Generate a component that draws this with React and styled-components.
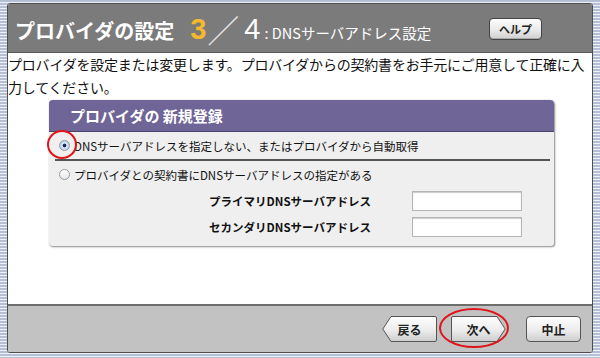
import React from 'react'
import styled, { createGlobalStyle } from 'styled-components'

const Global = createGlobalStyle`
  html, body { margin: 0; padding: 0; }
  body {
    width: 600px;
    height: 358px;
    overflow: hidden;
    font-family: "Noto Sans CJK JP", "Noto Sans", sans-serif;
    background: repeating-linear-gradient(to bottom, #b4bfd6 0 2px, #eef1f7 2px 3px);
  }
`

const Frame = styled.div`
  padding: 3px 7px 5px 7px;
  height: 358px;
  box-sizing: border-box;
`

const Window = styled.div`
  position: relative;
  height: 350px;
  display: flex;
  flex-direction: column;
  background: #fff;
  border: 1px solid #4d4d4d;
  border-radius: 3px;
  box-sizing: border-box;
  overflow: hidden;
`

const Header = styled.div`
  height: 48px;
  flex: none;
  display: flex;
  align-items: center;
  padding: 0 50px 0 7px;
  background: #7b7b7b;
  border-bottom: 1px solid #5a5a5a;
  color: #fff;
`

const Title = styled.h1`
  margin: 4px 0 0;
  font-size: 20px;
  font-weight: 700;
`

const Step = styled.span`
  margin-left: ${p => p.gap || 0}px;
  margin-top: 2px;
  font-family: "Liberation Sans", Arial, sans-serif;
  font-size: 29px;
  color: ${p => p.color || '#fff'};
  font-weight: ${p => p.weight || 400};
`

const Slash = styled.span`
  font-size: 32px;
  margin: 2px 5px 0 1px;
  font-weight: 300;
  color: #eaeaea;
`

const Sub = styled.span`
  margin-top: 8px;
  font-size: 14.5px;
  margin-left: 4px;
`

const Spacer = styled.div`flex: 1;`

const HelpButton = styled.button`
  width: 53px;
  height: 22px;
  margin-top: 2px;
  padding: 0;
  font-family: inherit;
  font-size: 11px;
  font-weight: 700;
  color: #222;
  border: 1px solid #444;
  border-radius: 4px;
  background: linear-gradient(to bottom, #fdfdfd 0%, #e9e9e9 55%, #cfcfcf 100%);
  box-shadow: inset 0 -1px 0 #aaa;
`

const Body = styled.div`
  flex: 1;
  padding: 0;
`

const Lead = styled.p`
  margin: 0;
  font-size: 14px;
  line-height: 23px;
  letter-spacing: -0.2px;
  color: #111;
`

const Panel = styled.section`
  width: 505px;
  margin: 1px 0 0 41px;
  background: #efefef;
  border-radius: 4px 4px 3px 3px;
  box-shadow: 1px 1px 2px rgba(0,0,0,0.45), 0 0 1px rgba(0,0,0,0.3);
  padding-bottom: 6px;
`

const PanelHead = styled.h2`
  margin: 0;
  height: 31px;
  display: flex;
  align-items: center;
  padding-left: 21px;
  background: #6f6597;
  border-radius: 4px 4px 0 0;
  border-bottom: 1px solid #4a4270;
  color: #fff;
  font-size: 15px;
  font-weight: 700;
`

const Option = styled.label`
  position: relative;
  display: flex;
  align-items: center;
  gap: 4px;
  height: ${p => p.h || 28}px;
  padding-left: 4px;
  margin: 0 4px 0 6px;
  font-size: 11.5px;
  color: #111;
  border-bottom: ${p => p.line ? '2px solid #555' : 'none'};
`

const Radio = styled.span`
  width: 11px;
  height: 11px;
  border-radius: 50%;
  border: 1px solid #9a9a9a;
  background: ${p => p.on
    ? 'radial-gradient(circle, #1c2a55 0 1.6px, #d6e7fb 2.2px, #9cc2ee 100%)'
    : 'linear-gradient(to bottom, #fff, #e8e8e8)'};
  box-sizing: border-box;
`

const Mark = styled.span`
  position: absolute;
  left: ${p => p.x}px;
  top: ${p => p.y}px;
  width: ${p => p.w}px;
  height: ${p => p.h}px;
  border: 2px solid #e0151b;
  border-radius: 50%;
  box-sizing: border-box;
  pointer-events: none;
`

const Field = styled.div`
  display: grid;
  grid-template-columns: 322px 110px;
  column-gap: 41px;
  align-items: center;
  height: 26px;
`

const FieldLabel = styled.span`
  text-align: right;
  font-size: 11.5px;
  font-weight: 700;
  color: #111;
`

const Input = styled.input`
  width: 110px;
  height: 20px;
  box-sizing: border-box;
  border: 1px solid #b5b5b5;
  box-shadow: inset 0 1px 1px #ccc;
  background: #fff;
`

const Footer = styled.div`
  position: relative;
  height: 46px;
  flex: none;
  display: flex;
  align-items: center;
  justify-content: flex-end;
  padding-right: 11px;
  background: #c2c2c2;
  border-top: 2px solid #6e6e6e;
`

const NavButton = styled.button`
  position: relative;
  width: 55px;
  height: 26px;
  padding: 0;
  margin-left: ${p => p.gap || 0}px;
  border: none;
  background: none;
  font-family: inherit;
  font-size: 12px;
  font-weight: 700;
  color: #222;
  svg { position: absolute; inset: 0; }
  span { position: relative; }
`

const shapes = {
  back: 'M9 0.5 H53 Q54.5 0.5 54.5 2 V24 Q54.5 25.5 53 25.5 H9 L0.8 13 Z',
  next: 'M2 0.5 H46 L54.2 13 L46 25.5 H2 Q0.5 25.5 0.5 24 V2 Q0.5 0.5 2 0.5 Z',
  stop: 'M4 0.5 H51 Q54.5 0.5 54.5 4 V22 Q54.5 25.5 51 25.5 H4 Q0.5 25.5 0.5 22 V4 Q0.5 0.5 4 0.5 Z'
}

const Btn = ({ kind, gap, children }) => (
  <NavButton gap={gap}>
    <svg width="55" height="26" viewBox="0 0 55 26">
      <defs>
        <linearGradient id={'g' + kind} x1="0" y1="0" x2="0" y2="1">
          <stop offset="0" stopColor="#fefefe" />
          <stop offset="0.55" stopColor="#ececec" />
          <stop offset="1" stopColor="#cdcdcd" />
        </linearGradient>
      </defs>
      <path d={shapes[kind]} fill={'url(#g' + kind + ')'} stroke="#555" strokeWidth="1" />
    </svg>
    <span>{children}</span>
  </NavButton>
)

export default function App() {
  return (
    <>
      <Global />
      <Frame>
        <Window>
          <Header>
            <Title>プロバイダの設定</Title>
            <Step color="#f6b92b" weight={700} gap={16}>3</Step>
            <Slash>／</Slash>
            <Step>4</Step>
            <Sub>: DNSサーバアドレス設定</Sub>
            <Spacer />
            <HelpButton>ヘルプ</HelpButton>
          </Header>
          <Body>
            <Lead>
              プロバイダを設定または変更します。プロバイダからの契約書をお手元にご用意して正確に入力してください。
            </Lead>
            <Panel>
              <PanelHead>プロバイダの 新規登録</PanelHead>
              <Option line h={27}>
                <Radio on />
                DNSサーバアドレスを指定しない、またはプロバイダから自動取得
                <Mark x={-8} y={-2} w={30} h={29} />
              </Option>
              <Option h={27}>
                <Radio />
                プロバイダとの契約書にDNSサーバアドレスの指定がある
              </Option>
              <Field>
                <FieldLabel>プライマリDNSサーバアドレス</FieldLabel>
                <Input />
              </Field>
              <Field>
                <FieldLabel>セカンダリDNSサーバアドレス</FieldLabel>
                <Input />
              </Field>
            </Panel>
          </Body>
          <Footer>
            <Btn kind="back">戻る</Btn>
            <Btn kind="next" gap={14}>次へ</Btn>
            <Btn kind="stop" gap={20}>中止</Btn>
            <Mark x={431} y={2} w={70} h={40} />
          </Footer>
        </Window>
      </Frame>
    </>
  )
}
